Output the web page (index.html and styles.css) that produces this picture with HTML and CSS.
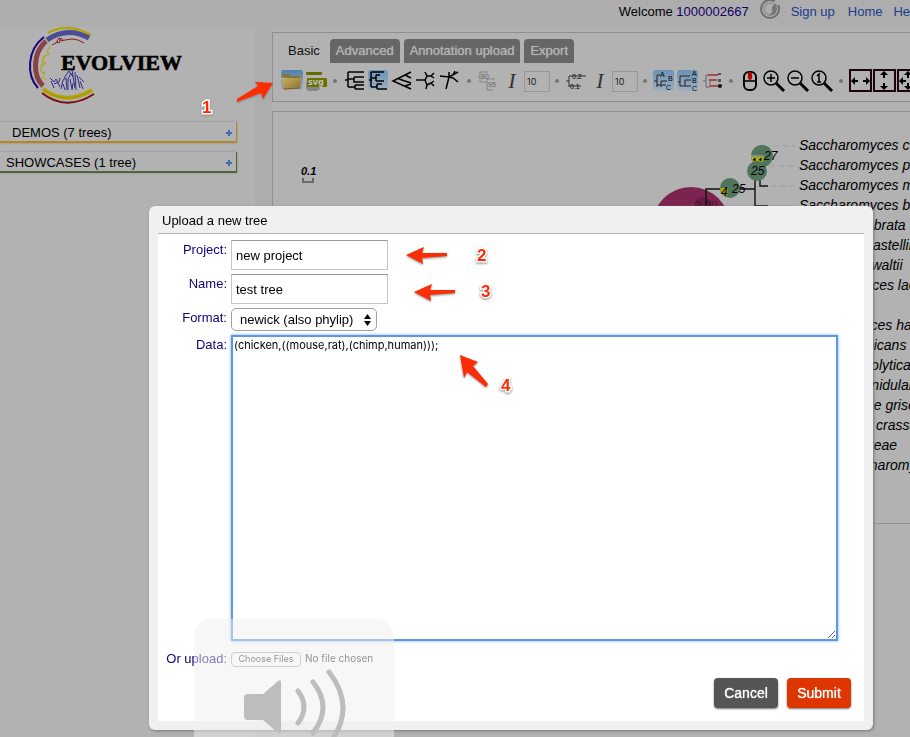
FILE: index.html
```html
<!DOCTYPE html>
<html lang="en">
<head>
<meta charset="utf-8">
<title>Evolview</title>
<link rel="stylesheet" href="styles.css">
</head>
<body>
<header class="topbar">
  <span>Welcome <a class="user" href="#">1000002667</a></span>
  <svg class="spinner" viewBox="0 0 20 20" aria-hidden="true"><circle cx="10" cy="9" r="9" fill="none" stroke="#6f6f6f" stroke-width="2" stroke-dasharray="47 5"/><circle cx="10" cy="9" r="6" fill="none" stroke="#979797" stroke-width="2"/><path d="M16 3l-4 4v5l-3 4 6-2 2-5z" fill="#777"/></svg>
  <a href="#">Sign up</a>
  <a class="home" href="#">Home</a>
  <a href="#">Help</a>
</header>

<div class="layout">
  <aside class="sidebar">
    <svg class="logo" viewBox="0 27 182 81" role="img" aria-label="Evolview">
      <g fill="none">
        <path d="M48 33Q68 22 91 35" stroke="#b3a400" stroke-width="2.2"/>
        <path d="M47 40Q67 26 89 38" stroke="#4d4a96" stroke-width="5"/>
        <path d="M44 37C27 50 26 75 38 88" stroke="#16067c" stroke-width="2"/>
        <path d="M46 41C32 54 33 76 43 86" stroke="#8a4344" stroke-width="5"/>
        <path d="M43 89Q66 106 92 90" stroke="#b3a400" stroke-width="4"/>
        <path d="M46 91Q67 105 90 91" stroke="#8e8430" stroke-dasharray="1 1"/>
        <path d="M42 93Q66 112 94 94" stroke="#770b0b" stroke-width="1.8"/>
        <path d="M52 45l4-2 3-5 2 3 4-1 7-1 6 1 6 3M56 42l3 1 2-5 2 2" stroke="#8b1b1b"/>
        <path d="M50 46l-3 6 2 2-5 2-2 6 4 1-5 3 0 6 4 1-3 4 5 3M44 62l-3 3 3 2M46 55l-3 5" stroke="#b3a400"/>
        <path d="M50 78l4 4 2-3 4 8M54 84l5-2 1-4M61 89l2-9 3-2 1 12M64 78l5-7 4 6M68 90l0-11 3-6M72 70l3 18M75 72l1 18M77 75l3 13M80 81l3 8M51 81l3 7M63 84l2 6M70 79l2 10M73 83l-1 7M79 77l5 5" stroke="#312a8d"/>
      </g>
      <text class="logo-text" x="61" y="70">EVOLVIEW</text>
    </svg>
    <button class="project project-demos" type="button"><span>DEMOS (7 trees)</span><svg class="plus" viewBox="0 0 6 6"><path d="M0 3h6M3 0v6"/></svg></button>
    <button class="project project-showcases" type="button"><span>SHOWCASES (1 tree)</span><svg class="plus" viewBox="0 0 6 6"><path d="M0 3h6M3 0v6"/></svg></button>
  </aside>

  <main class="main">
    <section class="panel tools">
      <nav class="tabs">
        <button class="tab active" type="button">Basic</button>
        <button class="tab" type="button">Advanced</button>
        <button class="tab" type="button">Annotation upload</button>
        <button class="tab" type="button">Export</button>
      </nav>
      <div class="toolbar">
        <button class="tool" type="button" aria-label="Open"><svg viewBox="0 0 24 24"><defs><linearGradient id="sky" x2="0" y2="1"><stop stop-color="#4d7fae"/><stop offset="1" stop-color="#a4b3c0"/></linearGradient><linearGradient id="gold" x2="1" y2="1"><stop stop-color="#c9b26b"/><stop offset="1" stop-color="#8b6d2c"/></linearGradient><linearGradient id="glow" x2="0" y2="1"><stop stop-color="#6a92b8"/><stop offset="1" stop-color="#9fb0be"/></linearGradient></defs><rect x="1" y="1" width="22" height="20" rx="3" fill="url(#sky)"/><path d="M2 8l1-3h6l2 2h10v3z" fill="#8b7136"/><path d="M1 9h17l4-1-2 11-17 2z" fill="url(#gold)"/><path d="M4 20l17-1" stroke="#75612e"/></svg></button>
        <button class="tool" type="button" aria-label="SVG"><svg viewBox="0 0 24 24"><path d="M2 13h14v7l-3 2H6q-4 0-4-4z" fill="#858585"/><rect x="2" y="3" width="16" height="3" rx="1" fill="#646b00"/><rect x="3" y="9" width="20" height="9" rx="1" fill="#6b7100"/><text class="svg-mark" x="4" y="16">svg</text></svg></button>
        <i class="dot"></i>
        <button class="tool" type="button" aria-label="Rectangular cladogram"><svg viewBox="0 0 24 24"><path class="k" d="M3 11h3M6 3v15M6 3h16M6 18h7M12 8v0h10M12 8v5h10M6 10h6M13 16v4M13 16h9M13 20h9"/></svg></button>
        <button class="tool" type="button" aria-label="Rectangular phylogram"><svg viewBox="0 0 24 24"><rect x="2" y="1" width="20" height="20" rx="3" fill="url(#glow)"/><path class="k" d="M3 11h3M5 3v15M5 3h13M5 9h5M10 6v6M10 6h4M10 12h8M5 18h6M11 15v5M11 15h5M11 20h10"/></svg></button>
        <button class="tool" type="button" aria-label="Slanted"><svg viewBox="0 0 24 24"><path class="k" d="M21 3L3 12l18 8M9 10l12 4M15 6l6 3M15 17l6-2"/></svg></button>
        <button class="tool" type="button" aria-label="Circular"><svg viewBox="0 0 24 24"><path class="k" d="M2 11h9l2-4-2-4M13 7h4l3-3M17 7l3 2M11 11l2 5-1 4M13 16l4-2 3 3M17 14l3-2"/></svg></button>
        <button class="tool" type="button" aria-label="Radial"><svg viewBox="0 0 24 24"><path class="k" d="M2 7l9 1 9-5M11 8l4 1 5 4M11 8l-3 12M11 8V3M15 6l2-4"/></svg></button>
        <i class="dot"></i>
        <button class="tool" type="button" aria-label="Bootstrap"><svg viewBox="0 0 24 24"><path d="M2 8h2M4 3v10M4 3h8M4 13h7M11 9v12M11 10h8M11 21h6" fill="none" stroke="#858585"/><text class="mini dim" x="5" y="10">80</text><text class="mini dim" x="12" y="18">95</text></svg></button>
        <button class="tool italic" type="button">I</button>
        <input class="size" value="10" aria-label="Bootstrap font size">
        <i class="dot"></i>
        <button class="tool" type="button" aria-label="Branch length"><svg viewBox="0 0 24 24"><path d="M2 12h3M5 7v11M5 7h17M5 17h12" fill="none" stroke="#333"/><text class="mini" x="8" y="10">0.2</text><text class="mini" x="6" y="20">0.1</text></svg></button>
        <button class="tool italic" type="button">I</button>
        <input class="size" value="10" aria-label="Branch length font size">
        <i class="dot"></i>
        <button class="tool" type="button" aria-label="Leaf labels"><svg viewBox="0 0 24 24"><rect x="1" y="1" width="21" height="21" rx="3" fill="url(#glow)"/><path d="M2 12h3M5 6v12M5 6h3M5 16h9M9 12v6M9 12h6" fill="none" stroke="#222"/><text class="abc" x="8" y="8">A</text><text class="abc" x="16" y="12">B</text><text class="abc" x="14" y="21">C</text></svg></button>
        <button class="tool" type="button" aria-label="Align labels"><svg viewBox="0 0 24 24"><rect x="1" y="1" width="21" height="21" rx="3" fill="url(#glow)"/><path d="M2 13h2M4 7v10M4 7h10M4 17h11M9 11v6M9 11h6" fill="none" stroke="#222"/><text class="abc" x="16" y="7">A</text><text class="abc" x="16" y="14">B</text><text class="abc" x="16" y="22">C</text></svg></button>
        <button class="tool" type="button" aria-label="Dotted lines"><svg viewBox="0 0 24 24"><path d="M3 12h3M6 6v12M6 6h3M6 18h4M10 11v7" fill="none" stroke="#666"/><path d="M8 6h10M9 11h8M10 17h8" stroke="#a32b27" stroke-width="1.4"/><path d="M18 4h3v2h-3zM18 10h3v3h-3z" fill="#555"/><circle cx="20" cy="17" r="2" fill="#111"/></svg></button>
        <i class="dot"></i>
        <button class="tool" type="button" aria-label="Mouse"><svg viewBox="0 0 24 24"><rect x="6" y="3" width="12" height="18" rx="5" fill="none" stroke="#000" stroke-width="2"/><path d="M6 12h12" stroke="#000" stroke-width="1.6"/><ellipse cx="12" cy="7" rx="2.2" ry="4" fill="#b90000"/></svg></button>
        <button class="tool" type="button" aria-label="Zoom in"><svg viewBox="0 0 24 24"><g class="lens"><circle cx="9" cy="9" r="7"/><path d="M5 9h8M9 5v8"/><path class="handle" d="M14 14l8 8"/></g></svg></button>
        <button class="tool" type="button" aria-label="Zoom out"><svg viewBox="0 0 24 24"><g class="lens"><circle cx="9" cy="9" r="7"/><path d="M5 9h8"/><path class="handle" d="M14 14l8 8"/></g></svg></button>
        <button class="tool" type="button" aria-label="Original size"><svg viewBox="0 0 24 24"><g class="lens"><circle cx="9" cy="9" r="7"/><path d="M7 7l2-2v8M7 13h4"/><path class="handle" d="M14 14l8 8"/></g></svg></button>
        <i class="dot"></i>
        <button class="tool" type="button" aria-label="Fit width"><svg viewBox="0 0 24 24"><rect class="frame" x="2" y="1" width="21" height="21"/><path d="M3 12l4-4v3h3v2H7v3zM22 12l-4-4v3h-3v2h3v3z"/></svg></button>
        <button class="tool" type="button" aria-label="Fit height"><svg viewBox="0 0 24 24"><rect class="frame" x="2" y="1" width="21" height="21"/><path d="M12 2l4 4h-3v3h-2V6H8zM12 21l4-4h-3v-3h-2v3H8z"/></svg></button>
        <button class="tool" type="button" aria-label="Fit page"><svg viewBox="0 0 24 24"><rect class="frame" x="2" y="1" width="21" height="21"/><path d="M3 12l4-4v3h3v2H7v3zM12 2l4 4h-3v3h-2V6H8zM12 21l4-4h-3v-3h-2v3H8zM22 12l-4-4v8z"/></svg></button>
      </div>
    </section>

    <section class="panel tree">
      <svg class="tree-canvas" viewBox="273 112 760 411" role="img" aria-label="Phylogenetic tree">
        <text class="scale" x="301" y="175">0.1</text>
        <path d="M303 178v4h10v-4" fill="none" stroke="#555" stroke-width="1.6"/>
        <g stroke="#9c9c9c" stroke-dasharray="5 4"><path d="M774 146h22M770 166h26M771 186h25M769 206h27"/></g>
        <circle cx="691" cy="226" r="39" fill="#7c2350"/>
        <circle cx="703" cy="206" r="9" fill="#671b43"/>
        <text class="count" x="694" y="210" fill-opacity=".4">2 29</text>
        <path d="M706 206v-17h49M755 172v34h13M760 172v14h8" fill="none" stroke="#111" stroke-width="1.4"/>
        <circle cx="762" cy="156" r="11" fill="#50745c"/>
        <path d="M751 157h13l-1 5h-10z" fill="#aaad00"/><path d="M751 156h13" stroke="#b2b2b2"/><path d="M755 161v-3l-2 2M761 161v-3l-2 2" stroke="#111"/>
        <circle cx="757" cy="171" r="10" fill="#50745c"/>
        <circle cx="730" cy="188" r="10" fill="#50745c"/>
        <path d="M720 188h8l-1 8q-6-2-7-8z" fill="#aaad00"/>
        <g class="count"><text x="764" y="160">27</text><text x="751" y="175">25</text><text x="721" y="196">4</text><text x="732" y="193">25</text></g>
        <g class="species">
          <text x="799" y="150">Saccharomyces cerevisiae</text>
          <text x="799" y="170">Saccharomyces paradoxus</text>
          <text x="799" y="190">Saccharomyces mikatae</text>
          <text x="799" y="210">Saccharomyces bayanus</text>
          <text x="799" y="230">Candida glabrata</text>
          <text x="799" y="250">Naumovia castellii</text>
          <text x="799" y="270">Lachancea waltii</text>
          <text x="799" y="290">Kluyveromyces lactis</text>
          <text x="799" y="330">Debaryomyces hansenii</text>
          <text x="799" y="350">Candida albicans</text>
          <text x="799" y="370">Yarrowia lipolytica</text>
          <text x="799" y="390">Aspergillus nidulans</text>
          <text x="799" y="410">Magnaporthe grisea</text>
          <text x="799" y="430">Neurospora crassa</text>
          <text x="799" y="450">Gibberella zeae</text>
          <text x="799" y="470">Schizosaccharomyces pombe</text>
        </g>
      </svg>
    </section>
  </main>
</div>

<div class="overlay">
  <div class="dialog" role="dialog" aria-labelledby="dialog-title">
    <h1 class="dialog-title" id="dialog-title">Upload a new tree</h1>
    <form class="form">
      <label for="project">Project:</label>
      <input class="field" id="project" value="new project">
      <label for="name">Name:</label>
      <input class="field" id="name" value="test tree">
      <label for="format">Format:</label>
      <div class="select">
        <select id="format"><option>newick (also phylip)</option></select>
        <svg class="select-arrows" viewBox="0 0 7 12"><path d="M0 5l3.500-5L7 5zM0 7h7l-3.500 5z"/></svg>
      </div>
      <label for="data">Data:</label>
      <textarea class="data" id="data" spellcheck="false">(chicken,((mouse,rat),(chimp,human)));</textarea>
      <label class="upload-label" for="file">Or upload:</label>
      <input class="file" id="file" type="file" multiple>
      <div class="actions">
        <button class="btn" type="button">Cancel</button>
        <button class="btn btn-submit" type="button">Submit</button>
      </div>
    </form>
  </div>
</div>

<div class="volume" aria-hidden="true">
  <svg viewBox="0 0 200 118"><path d="M54 75h15l15-13q3-2 3 1v50q0 3-3 1l-15-13H54q-4 0-4-4V79q0-4 4-4z" fill="#bdbdbd"/><path d="M104 72q12 16 0 32M119 63q20 25 0 51M135 53q28 36 0 72" fill="none" stroke="#bdbdbd" stroke-width="5" stroke-linecap="round"/></svg>
</div>

<svg class="notes" width="910" height="737" viewBox="0 0 910 737">
  <g fill="#fc2d05">
    <path d="M273 83l-10 16-2-6-24 9 0-3 21-13-3-4z"/>
    <path d="M406 255l18-8-2 6 25 0 0 3-25 2 1 6z"/>
    <path d="M414 292l18-8-2 6 25 0 0 3-25 2 1 6z"/>
    <path d="M460 355l18 7-5 4 15 18-2 3-19-15-3 6z"/>
  </g>
  <g class="step"><text x="202" y="113">1</text><text x="477" y="261">2</text><text x="481" y="297">3</text><text x="501" y="391">4</text></g>
</svg>
</body>
</html>
```

FILE: styles.css
```css
* { box-sizing: border-box; }

body {
  margin: 0;
  height: 100vh;
  overflow: hidden;
  display: flex;
  flex-direction: column;
  background: #adadad;
  color: #000;
  font: 13px/16px "Liberation Sans", Arial, sans-serif;
}

button, input, select, textarea { font: inherit; color: inherit; margin: 0; }
button { border: 0; background: none; padding: 0; }
a { color: #1c3c90; text-decoration: none; }

.topbar {
  display: flex;
  gap: 11px;
  height: 27px;
  margin-left: 68%;
  padding-top: 4px;
  white-space: nowrap;
}
.topbar .user { color: #14006b; }
.topbar .home { padding: 0 0 0 2px; }
.spinner { flex: none; width: 20px; height: 20px; margin-top: -4px; }

.layout {
  flex: 1;
  display: grid;
  grid-template-columns: 255px 1fr;
  gap: 17px;
}

.sidebar {
  display: flex;
  flex-direction: column;
  gap: 9px;
  padding-right: 18px;
  background: #b2b2b2;
}
.logo { width: 182px; height: 81px; margin-bottom: 5px; }
.logo-text { font: bold 22px "Liberation Serif", serif; stroke: #000; stroke-width: .6px; }

.project {
  display: flex;
  justify-content: space-between;
  align-items: center;
  height: 21px;
  padding: 2px 4px 0 6px;
  border: solid #b78624;
  border-width: 0 1px 2px 0;
  box-shadow: 0 0 2px #888;
}
.project-demos { padding-left: 12px; }
.project-showcases { border-color: #52653c; }
.plus { width: 6px; height: 6px; fill: none; stroke: #4068b6; stroke-width: 2px; }

.main {
  display: flex;
  flex-direction: column;
  gap: 9px;
  min-width: 0;
  padding-top: 5px;
  background: #b1b1b1;
}
.panel {
  margin-right: -20px;
  border: 1px solid #8f8f8f;
  background: #b2b2b2;
}

.tools { height: 70px; padding: 6px 7px; }
.tabs { display: flex; gap: 4px; }
.tab {
  height: 24px;
  padding: 0 6px;
  border-radius: 4px 4px 0 0;
  background: #666;
  color: #b2b2b2;
  text-shadow: 0 0 1px #b2b2b2;
  white-space: nowrap;
}
.tab.active { background: none; color: #111; padding-left: 8px; text-shadow: none; }

.toolbar { display: flex; align-items: center; height: 24px; margin-top: 6px; }
.tool { flex: none; width: 24px; height: 24px; }
.tool svg { display: block; width: 24px; height: 24px; }
.tool .k { fill: none; stroke: #000; stroke-width: 1.5px; }
.tool.italic { font: italic 22px/24px "Liberation Serif", serif; color: #333; }
.svg-mark { font: bold 8px "DejaVu Sans", sans-serif; fill: #c0c0c0; }
.mini { font: 7px "Liberation Sans", sans-serif; }
.mini.dim { fill: #666; }
.abc { font: 7px/7px "Liberation Sans", sans-serif; }
.lens { fill: none; stroke: #000; stroke-width: 1.5px; }
.lens .handle { stroke-width: 3px; }
.frame { fill: none; stroke: #1d0505; stroke-width: 2px; }
.dot { flex: none; width: 4px; height: 4px; margin: 0 5px; border-radius: 50%; background: #747474; }
.size {
  flex: none;
  width: 26px;
  height: 21px;
  padding: 0 2px;
  border: 1px solid #989898;
  background: #b2b2b2;
  color: #222;
  font: 9px Inter, sans-serif;
}

.tree { overflow: hidden; }
.tree-canvas { display: block; width: 760px; height: 411px; }
.scale { font: italic bold 11px "Liberation Sans", sans-serif; }
.count { font: italic 12px "Liberation Sans", sans-serif; }
.species { font: italic 14px "Liberation Sans", sans-serif; }

.overlay { position: fixed; inset: 0; padding: 206px 37px 7px 149px; }
.dialog {
  padding: 0 9px 9px;
  border-radius: 6px;
  background: #f0f0f0;
  box-shadow: 1px 1px 3px #777;
}
.dialog-title {
  margin: 0;
  padding: 7px 4px 4px;
  border-bottom: 1px solid #b4b4b4;
  font-size: 13px;
  font-weight: normal;
}

.form {
  display: grid;
  grid-template-columns: 69px 1fr;
  gap: 4px;
  padding: 6px 13px 13px 0;
  background: #fff;
}
.form label { text-align: right; padding-top: 2px; color: #14007a; white-space: nowrap; }
.field {
  width: 157px;
  height: 30px;
  padding: 2px 4px;
  border: 1px solid #c4c4c4;
  border-top-color: #999;
  background: #fff;
}
.select { position: relative; width: 146px; }
.select select {
  appearance: none;
  display: block;
  width: 100%;
  height: 23px;
  padding: 0 8px;
  border: 1px solid #a0a0a0;
  border-radius: 5px;
  background: #fff;
}
.select-arrows { position: absolute; right: 6px; top: 6px; width: 7px; height: 12px; }
.data {
  display: block;
  width: calc(100% - 13px);
  height: 306px;
  padding: 1px;
  border: 2px solid #5c97e2;
  outline: 0;
  box-shadow: 0 0 3px #78b0f5;
  background: #fff;
  font: 11px/14px Inter, sans-serif;
}
.form .upload-label { padding-top: 6px; }
.file { margin-top: 5px; height: 18px; font: 10px/16px Inter, sans-serif; color: #333; }
.file::file-selector-button {
  width: 70px;
  height: 15px;
  margin: 0 4px 0 0;
  padding: 0;
  border: 1px solid #b0b0b0;
  border-radius: 4px;
  background: #fff;
  color: #333;
  font: 9px/12px Inter, sans-serif;
}
.actions { grid-column: 1 / -1; display: flex; justify-content: flex-end; gap: 9px; padding-top: 6px; }
.btn {
  width: 64px;
  height: 30px;
  border-radius: 4px;
  background: #555;
  box-shadow: 0 1px 2px #777;
  color: #fff;
  font-size: 14px;
  text-shadow: 0 0 1px #fff;
}
.btn-submit { background: #de3600; }

.volume {
  position: fixed;
  left: 194px;
  top: 619px;
  width: 200px;
  bottom: 0;
  overflow: hidden;
  border-radius: 18px 18px 0 0;
  background: rgba(240, 240, 240, .5);
}
.volume svg { display: block; width: 200px; height: 118px; }

.notes { position: fixed; left: 0; top: 0; pointer-events: none; filter: drop-shadow(0 1px 1px #888); }
.step {
  font: bold 17px "Liberation Sans", sans-serif;
  fill: #fc2d05;
  stroke: #fff;
  stroke-width: 3px;
  paint-order: stroke;
}
```
